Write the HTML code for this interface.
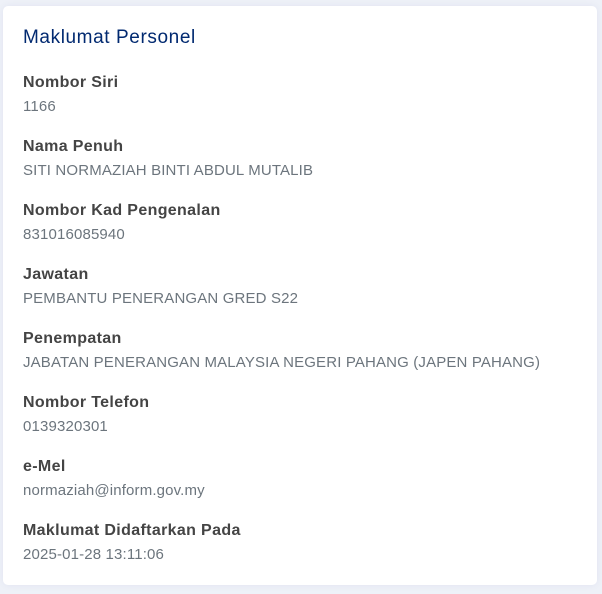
<!DOCTYPE html>
<html><head><style>
html,body{margin:0;padding:0;}
body{width:602px;height:594px;background:#eef1f8;font-family:"Liberation Sans",sans-serif;overflow:hidden;position:relative;}
.card{position:absolute;left:3px;top:6px;width:594px;height:579px;background:#fff;border-radius:5px;box-shadow:0 0 8px rgba(1,41,112,0.06);}
h5{position:absolute;left:20px;top:21px;margin:0;font-size:19px;font-weight:normal;color:#012970;letter-spacing:0.6px;}
.f{position:absolute;left:20px;}
.l{font-size:16px;font-weight:bold;color:#444;line-height:20px;letter-spacing:0.35px;}
.v{font-size:15px;color:#6c757d;line-height:20px;margin-top:4px;letter-spacing:0.15px;}
</style></head><body>
<div class="card">
<h5>Maklumat Personel</h5>
<div class="f" style="top:67px"><div class="l">Nombor Siri</div><div class="v">1166</div></div>
<div class="f" style="top:131px"><div class="l">Nama Penuh</div><div class="v">SITI NORMAZIAH BINTI ABDUL MUTALIB</div></div>
<div class="f" style="top:195px"><div class="l">Nombor Kad Pengenalan</div><div class="v">831016085940</div></div>
<div class="f" style="top:259px"><div class="l">Jawatan</div><div class="v">PEMBANTU PENERANGAN GRED S22</div></div>
<div class="f" style="top:323px"><div class="l">Penempatan</div><div class="v">JABATAN PENERANGAN MALAYSIA NEGERI PAHANG (JAPEN PAHANG)</div></div>
<div class="f" style="top:387px"><div class="l">Nombor Telefon</div><div class="v">0139320301</div></div>
<div class="f" style="top:451px"><div class="l">e-Mel</div><div class="v">normaziah@inform.gov.my</div></div>
<div class="f" style="top:515px"><div class="l">Maklumat Didaftarkan Pada</div><div class="v">2025-01-28 13:11:06</div></div>
</div>
</body></html>
